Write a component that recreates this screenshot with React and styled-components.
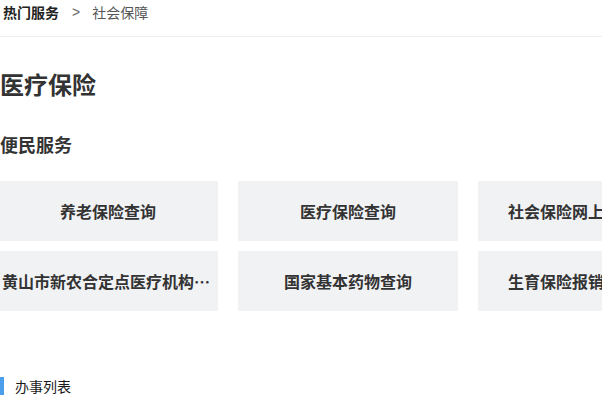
import React from 'react';
import styled, { createGlobalStyle } from 'styled-components';

const GlobalStyle = createGlobalStyle`
    html, body {
        margin: 0;
        padding: 0;
        background: #fff;
        overflow: hidden;
    }
    body {
        font-family: "Noto Sans CJK SC", "Noto Sans", sans-serif;
        color: #333;
    }
`;

const Page = styled.div`
    width: 602px;
    height: 400px;
    overflow: hidden;
`;

const Breadcrumb = styled.div`
    height: 37px;
    box-sizing: border-box;
    padding-left: 3px;
    display: flex;
    align-items: flex-start;
    font-size: 14px;
    line-height: 24px;
    border-bottom: 1px solid #eeeeee;
    .current {
        font-weight: 700;
        color: #222;
    }
    .sep {
        margin: 0 12px 0 13px;
        color: #666;
        font-family: "Liberation Sans", sans-serif;
    }
    .leaf {
        color: #555;
    }
`;

const Title = styled.h1`
    margin: 31px 0 0 0;
    font-size: 24px;
    line-height: 32px;
    font-weight: 700;
    color: #333;
`;

const SubTitle = styled.h2`
    margin: 31px 0 0 0;
    font-size: 18px;
    line-height: 26px;
    font-weight: 700;
    color: #333;
`;

const ServiceGrid = styled.div`
    margin: 24px 0 0 -2px;
    display: grid;
    grid-template-columns: repeat(3, 220px);
    grid-auto-rows: 60px;
    gap: 10px 20px;
`;

const ServiceCard = styled.div`
    background: #f1f2f4;
    padding: 0 4px;
    display: flex;
    align-items: center;
    justify-content: center;
    font-size: 16px;
    font-weight: 700;
    color: #333;
    min-width: 0;
    span {
        display: block;
        max-width: 100%;
        white-space: nowrap;
        overflow: hidden;
        text-overflow: ellipsis;
    }
`;

const SectionTitle = styled.div`
    margin-top: 66px;
    display: flex;
    align-items: center;
    height: 18px;
    border-left: 4px solid #4a9eea;
    padding-left: 11px;
    font-size: 14px;
    font-weight: 400;
    color: #1a1a1a;
`;

const services = [
    '养老保险查询',
    '医疗保险查询',
    '社会保险网上办事大厅',
    '黄山市新农合定点医疗机构查询',
    '国家基本药物查询',
    '生育保险报销办理流程',
];

export default function App() {
    return (
        <Page>
            <GlobalStyle />
            <Breadcrumb>
                <span className="current">热门服务</span>
                <span className="sep">&gt;</span>
                <span className="leaf">社会保障</span>
            </Breadcrumb>
            <Title>医疗保险</Title>
            <SubTitle>便民服务</SubTitle>
            <ServiceGrid>
                {services.map(s => (
                    <ServiceCard key={s}>
                        <span>{s}</span>
                    </ServiceCard>
                ))}
            </ServiceGrid>
            <SectionTitle>办事列表</SectionTitle>
        </Page>
    );
}
